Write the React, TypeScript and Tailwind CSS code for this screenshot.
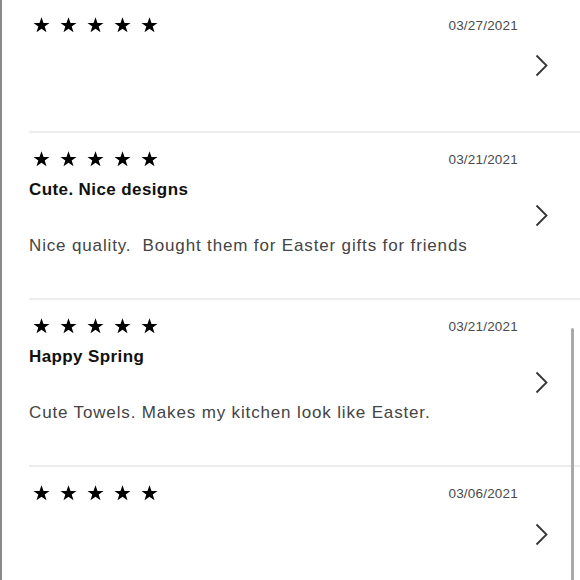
import { Fragment } from "react";

type Review = {
  date: string;
  title?: string;
  body?: string;
};

const reviews: Review[] = [
  { date: "03/27/2021" },
  {
    date: "03/21/2021",
    title: "Cute. Nice designs",
    body: "Nice quality.  Bought them for Easter gifts for friends",
  },
  {
    date: "03/21/2021",
    title: "Happy Spring",
    body: "Cute Towels. Makes my kitchen look like Easter.",
  },
  { date: "03/06/2021" },
];

function Star() {
  return (
    <svg width="17" height="16" viewBox="0 0 24 23" className="block">
      <path
        d="M12 0.5l2.9 8.1h8.6l-6.9 5.1 2.6 8.3L12 17l-7.2 5 2.6-8.3L0.5 8.6h8.6z"
        fill="#000"
      />
    </svg>
  );
}

function Chevron() {
  return (
    <svg width="13" height="23" viewBox="0 0 13 23" className="block">
      <polyline
        points="1.5,1.5 11.5,11.5 1.5,21.5"
        fill="none"
        stroke="#333"
        strokeWidth="1.8"
        strokeLinejoin="miter"
      />
    </svg>
  );
}

function ReviewRow({ review, last }: { review: Review; last: boolean }) {
  const full = !!review.title;
  return (
    <div
      className={
        "ml-[27px] flex " +
        (last ? "" : "border-b-2 border-[#ececec] ") +
        (full ? "h-[167px]" : "h-[134px]")
      }
    >
      <div className="flex-1 min-w-0 pt-[18px]">
        <div className="flex items-center justify-between h-4">
          <div className="flex items-center gap-[10px] pl-[4px]">
            {[0, 1, 2, 3, 4].map((i) => (
              <Star key={i} />
            ))}
          </div>
          <span className="pt-[3px] text-[13.5px] text-[#4a4a4a] tracking-[0.2px]">{review.date}</span>
        </div>
        {full ? (
          <Fragment>
            <div className="mt-[13px] text-[17px] leading-[20px] font-bold text-[#111] tracking-[0.4px]">
              {review.title}
            </div>
            <div className="mt-[36px] text-[17px] leading-[20px] text-[#444] whitespace-pre tracking-[0.85px]">
              {review.body}
            </div>
          </Fragment>
        ) : null}
      </div>
      <div className="w-[62px] flex items-center pl-[17px] shrink-0">
        <Chevron />
      </div>
    </div>
  );
}

export default function App() {
  return (
    <div
      className="relative w-[580px] h-[580px] overflow-hidden bg-white border-l-2 border-[#8a8a8a]"
      style={{ fontFamily: '"Liberation Sans", Arial, sans-serif' }}
    >
      <div className="-mt-[1px]">
        {reviews.map((r, i) => (
          <ReviewRow key={i} review={r} last={i === reviews.length - 1} />
        ))}
      </div>
      <div className="absolute right-[6px] top-[328px] w-[3px] h-[270px] rounded-full bg-[#a9a9a9]" />
    </div>
  );
}
